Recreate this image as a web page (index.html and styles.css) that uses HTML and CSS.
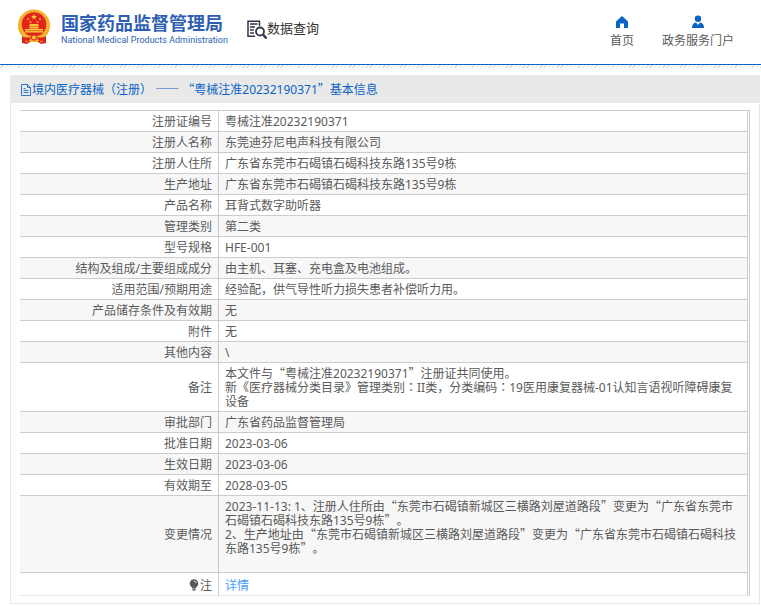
FILE: index.html
```html
<!DOCTYPE html>
<html lang="zh-CN">
<head>
<meta charset="utf-8">
<meta name="viewport" content="width=device-width, initial-scale=1">
<title>数据查询</title>
<link rel="stylesheet" href="styles.css">
</head>
<body>
<header class="site-header">
  <div class="brand">
    <svg class="emblem" viewBox="0 0 34 36" aria-hidden="true">
      <path fill="#d8241c" d="M5 25 L5 34 L10 35 L13 33 L21 33 L24 35 L29 34 L29 25 Z"/>
      <ellipse cx="17" cy="16.500" rx="16" ry="16" fill="#f3b52c"/>
      <ellipse cx="17" cy="16.500" rx="15" ry="15" fill="none" stroke="#eba52a" stroke-width="1" stroke-dasharray="2 1.500"/>
      <circle cx="17" cy="15.500" r="12.300" fill="#e3241d"/>
      <path fill="#f7c83a" d="M17 5l.8 2h2.200l-1.800 1.400.7 2.200-1.900-1.300-1.900 1.300.7-2.200-1.800-1.400h2.200z"/>
      <g fill="#f2a834"><circle cx="11" cy="10" r="1"/><circle cx="23" cy="10" r="1"/><circle cx="13.500" cy="13" r="1"/><circle cx="20.500" cy="13" r="1"/></g>
      <path fill="#f7c83a" d="M12 17l1-2h8l1 2zM12.500 17.500h9v2h-9zM8 20h18v3.500H8z"/>
      <path stroke="#e3241d" stroke-width=".6" d="M8 21.700h18"/>
      <path fill="#f3b52c" d="M6 25q11 4 22 0l-2 5q-9 3-18 0z"/>
      <path fill="#d8241c" d="M6 28q5 1 8 0l-1 3q-4 1-7 0zM28 28q-5 1-8 0l1 3q4 1 7 0z"/>
      <circle cx="17" cy="28.500" r="3" fill="#e3241d"/>
      <circle cx="17" cy="28.500" r="2" fill="#f7c83a"/>
      <path fill="none" stroke="#f3b52c" stroke-width="1" d="M8 32l3 1M26 32l-3 1M13 32.500h8"/>
    </svg>
    <div class="brand-text">
      <strong class="brand-name">国家药品监督管理局</strong>
      <span class="brand-en">National Medical Products Administration</span>
    </div>
  </div>
  <div class="section">
    <svg class="section-icon" viewBox="0 0 20 20" fill="none" stroke="#34344a" aria-hidden="true">
      <path stroke-width="1.500" d="M12.500 6V1.200H1V16.200H8"/>
      <path stroke-width="1.300" d="M3 4h7.500M3 7h5M3 10h4M3 13h4"/>
      <circle cx="13" cy="11.500" r="4" stroke-width="1.800"/>
      <path stroke-width="2.400" d="M16 14.500l3.500 4"/>
    </svg>
    <span>数据查询</span>
  </div>
  <nav class="site-nav">
    <a href="#">
      <svg class="nav-icon" viewBox="0 0 14 14" aria-hidden="true"><path fill="#0a63c6" d="M7 1L1 6.500V13h4V8.500h4V13h4V6.500z"/></svg>
      <span>首页</span>
    </a>
    <a href="#">
      <svg class="nav-icon" viewBox="0 0 14 14" aria-hidden="true"><circle cx="7" cy="3.700" r="3.200" fill="#0a63c6"/><path fill="#0a63c6" d="M1 13q0-5 4-5.500L7 10l2-2.500q4 .5 4 5.500z"/></svg>
      <span>政务服务门户</span>
    </a>
  </nav>
</header>
<div class="hatch"></div>
<main class="panel">
  <h1 class="panel-title">
    <svg class="doc-icon" viewBox="0 0 12 12" fill="none" stroke="#2f74cc" aria-hidden="true"><path d="M1.500 .5h6l3 3v8h-9zM7.500 .5v3h3M3.500 4.500h2M3.500 6.500h5M3.500 8.500h5"/></svg>
    <span>境内医疗器械（注册） <span class="cjk">——</span> <span class="cjk">“</span>粤械注准20232190371<span class="cjk">”</span>基本信息</span>
  </h1>
  <div class="panel-body">
    <div class="frame">
      <table class="info">
        <tbody>
          <tr><th scope="row">注册证编号</th><td>粤械注准20232190371</td></tr>
          <tr><th scope="row">注册人名称</th><td>东莞迪芬尼电声科技有限公司</td></tr>
          <tr><th scope="row">注册人住所</th><td>广东省东莞市石碣镇石碣科技东路135号9栋</td></tr>
          <tr><th scope="row">生产地址</th><td>广东省东莞市石碣镇石碣科技东路135号9栋</td></tr>
          <tr><th scope="row">产品名称</th><td>耳背式数字助听器</td></tr>
          <tr><th scope="row">管理类别</th><td>第二类</td></tr>
          <tr><th scope="row">型号规格</th><td>HFE-001</td></tr>
          <tr><th scope="row">结构及组成/主要组成成分</th><td>由主机、耳塞、充电盒及电池组成。</td></tr>
          <tr><th scope="row">适用范围/预期用途</th><td>经验配，供气导性听力损失患者补偿听力用。</td></tr>
          <tr><th scope="row">产品储存条件及有效期</th><td>无</td></tr>
          <tr><th scope="row">附件</th><td>无</td></tr>
          <tr><th scope="row">其他内容</th><td>\</td></tr>
          <tr><th scope="row">备注</th><td>本文件与<span class="cjk">“</span>粤械注准20232190371<span class="cjk">”</span>注册证共同使用。<br>新《医疗器械分类目录》管理类别<span class="mid" lang="zh-TW">：</span>II类，分类编码<span class="mid" lang="zh-TW">：</span>19医用康复器械-01认知言语视听障碍康复设备</td></tr>
          <tr><th scope="row">审批部门</th><td>广东省药品监督管理局</td></tr>
          <tr><th scope="row">批准日期</th><td>2023-03-06</td></tr>
          <tr><th scope="row">生效日期</th><td>2023-03-06</td></tr>
          <tr><th scope="row">有效期至</th><td>2028-03-05</td></tr>
          <tr><th scope="row">变更情况</th><td>2023-11-13: 1、注册人住所由<span class="cjk">“</span>东莞市石碣镇新城区三横路刘屋道路段<span class="cjk">”</span>变更为<span class="cjk">“</span>广东省东莞市石碣镇石碣科技东路135号9栋<span class="cjk">”</span>。<br>2、生产地址由<span class="cjk">“</span>东莞市石碣镇新城区三横路刘屋道路段<span class="cjk">”</span>变更为<span class="cjk">“</span>广东省东莞市石碣镇石碣科技东路135号9栋<span class="cjk">”</span>。<br><br></td></tr>
          <tr class="note"><th scope="row"><svg class="bulb" viewBox="0 0 10 12" aria-hidden="true"><circle cx="5" cy="4.500" r="4.300" fill="#5a5a5a"/><path fill="#5a5a5a" d="M3 8h4v1.500H3zM3.500 10h3v1.500h-3z"/><path fill="none" stroke="#ddd" d="M5 2q2 0 2.500 2"/></svg>注</th><td><a href="#">详情</a></td></tr>
        </tbody>
      </table>
    </div>
  </div>
</main>
</body>
</html>
```
FILE: styles.css
```css
* {
  box-sizing: border-box;
}

body {
  margin: 0;
  background: #fff;
  color: #5a5a5a;
  font: 12px/14px "Noto Sans", "Noto Sans CJK SC", sans-serif;
  text-spacing-trim: space-all;
}

a {
  color: #409eff;
  text-decoration: none;
}

/* Full-width quotes and dashes */
.cjk {
  font-family: "Noto Sans CJK SC", sans-serif;
  line-height: 0;
}

/* Colon centred in its cell */
.mid {
  font-family: "Noto Sans CJK TC", sans-serif;
  line-height: 0;
}

.site-header {
  display: flex;
  align-items: flex-start;
  height: 65px;
  padding: 0 27px 0 17px;
  border-bottom: 1px solid #0a63c6;
}

.brand {
  display: flex;
  gap: 10px;
  padding-top: 9px;
}

.emblem {
  width: 34px;
  height: 36px;
}

.brand-text {
  display: flex;
  flex-direction: column;
  padding-top: 4px;
  color: #2e5fb3;
  white-space: nowrap;
}

.brand-name {
  font-size: 18px;
  line-height: 20px;
}

.brand-en {
  font: 400 9px/14px Roboto, sans-serif;
}

.section {
  display: flex;
  align-items: flex-start;
  margin-left: 19px;
  padding-top: 18px;
  color: #333;
  font-size: 13px;
  line-height: 20px;
}

.section-icon {
  width: 20px;
  height: 20px;
  margin-top: 2px;
}

.site-nav {
  display: flex;
  gap: 28px;
  margin-left: auto;
  padding-top: 15px;
}

.site-nav a {
  display: flex;
  flex-direction: column;
  align-items: center;
  gap: 5px;
  color: #5a5a5a;
}

.nav-icon {
  width: 14px;
  height: 14px;
}

.hatch {
  height: 3px;
  background: repeating-linear-gradient(135deg, #fff 0 2px, #ddd 2px 3px);
}

.panel {
  margin: 7px 1px 2px 10px;
  border: 1px solid #e9e9ec;
  border-top: 0;
}

.panel-title {
  display: flex;
  align-items: center;
  margin: 0 -1px;
  padding: 2px 10px 0;
  background: #e9e9e9;
  color: #0a63c6;
  font-size: 12px;
  font-weight: 400;
  line-height: 26px;
}

.doc-icon {
  width: 12px;
  height: 12px;
}

.panel-body {
  padding: 7px 9px;
}

.frame {
  padding-right: 1px;
  border-top: 1px solid #ccc;
  border-right: 1px solid #ccc;
}

.info {
  width: 100%;
  border-collapse: separate;
  border-spacing: 0;
}

.info th,
.info td {
  padding: 4px 6px 2px;
  border-bottom: 1px solid #ccc;
  font-weight: 400;
  vertical-align: middle;
}

.info th {
  width: 198px;
  text-align: right;
}

.info td {
  border-right: 1px solid #ccc;
  border-left: 1px solid #ccc;
  text-align: left;
}

.info tr:nth-child(even) {
  background: #f7f7f7;
}

.info .note th,
.info .note td {
  padding-top: 6px;
  padding-bottom: 2px;
  border-bottom-color: #e9e9ec;
}

.bulb {
  width: 10px;
  height: 12px;
  margin-right: 1px;
  vertical-align: -1px;
}
```
